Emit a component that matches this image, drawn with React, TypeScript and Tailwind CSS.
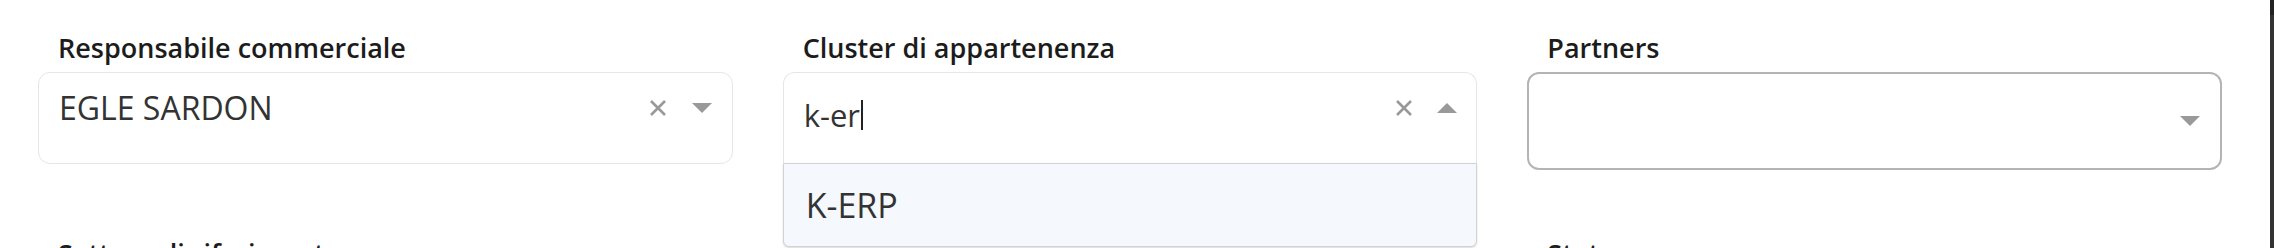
import { useState } from 'react'

function ClearIcon() {
  return (
    <svg width="18" height="16" viewBox="0 0 18 16" className="shrink-0">
      <path d="M2 1 L16 15 M16 1 L2 15" stroke="#999999" strokeWidth="2.6" strokeLinecap="butt" fill="none" />
    </svg>
  )
}

function Caret({ up = false }: { up?: boolean }) {
  return (
    <svg width="20" height="10" viewBox="0 0 20 10" className="shrink-0">
      {up ? <path d="M10 0 L20 10 L0 10 Z" fill="#999999" /> : <path d="M0 0 L20 0 L10 10 Z" fill="#999999" />}
    </svg>
  )
}

function Label({ children }: { children: React.ReactNode }) {
  return <div className="pl-[20px] text-[27px] font-semibold leading-[32px] text-[#1c1c1c] mb-[8px]">{children}</div>
}

export default function App() {
  const [query] = useState('k-er')

  return (
    <div className="flex h-[248px] w-full overflow-hidden bg-white" style={{ fontFamily: '"Open Sans", "Noto Sans", sans-serif' }}>
      <div className="flex-1 pl-[38px] pr-[48px] pt-[32px]">
        <div className="grid grid-cols-3 gap-x-[50px] gap-y-[68px]">
          {/* --- Responsabile commerciale --- */}
          <div>
            <Label>Responsabile commerciale</Label>
            <div className="h-[92px] rounded-[12px] border border-[#e6e6e6] bg-white">
              <div className="flex h-[70px] items-center pl-[20px] pr-[20px]">
                <span className="flex-1 text-[32px] text-[#333333]">EGLE SARDON</span>
                <div className="flex items-center gap-[25px]">
                  <ClearIcon />
                  <Caret />
                </div>
              </div>
            </div>
          </div>

          {/* --- Cluster di appartenenza (aperto) --- */}
          <div className="relative">
            <Label>Cluster di appartenenza</Label>
            <div className="h-[91px] rounded-t-[12px] border border-b-0 border-[#e6e6e6] bg-white">
              <div className="flex h-[70px] items-center pl-[20px] pr-[19px]">
                <div className="flex flex-1 items-center pt-[14px]">
                  <span className="text-[31px] text-[#333333]">{query}</span>
                  <span className="ml-[1px] h-[30px] w-[2px] bg-[#222222]" />
                </div>
                <div className="flex items-center gap-[24px]">
                  <ClearIcon />
                  <Caret up />
                </div>
              </div>
            </div>
            <div className="absolute left-0 right-0 top-[131px] z-10 flex h-[84px] items-center rounded-b-[6px] border border-[#d2d2d2] bg-[#f5f8fc] pl-[22px] shadow-[0_1px_2px_rgba(0,0,0,0.15)]">
              <span className="text-[34px] text-[#333333]">K-ERP</span>
            </div>
          </div>

          {/* --- Partners --- */}
          <div>
            <Label>Partners</Label>
            <div className="flex h-[98px] items-center justify-end rounded-[12px] border-2 border-[#b4b4b4] bg-white pr-[20px]">
              <Caret />
            </div>
          </div>

          <div>
            <Label>Settore di riferimento</Label>
          </div>
          <div />
          <div>
            <Label>Stato</Label>
          </div>
        </div>
      </div>
      <div className="flex w-[4px] flex-col bg-[#333333]">
        <div className="h-[15px] bg-[#222222]" />
      </div>
    </div>
  )
}
